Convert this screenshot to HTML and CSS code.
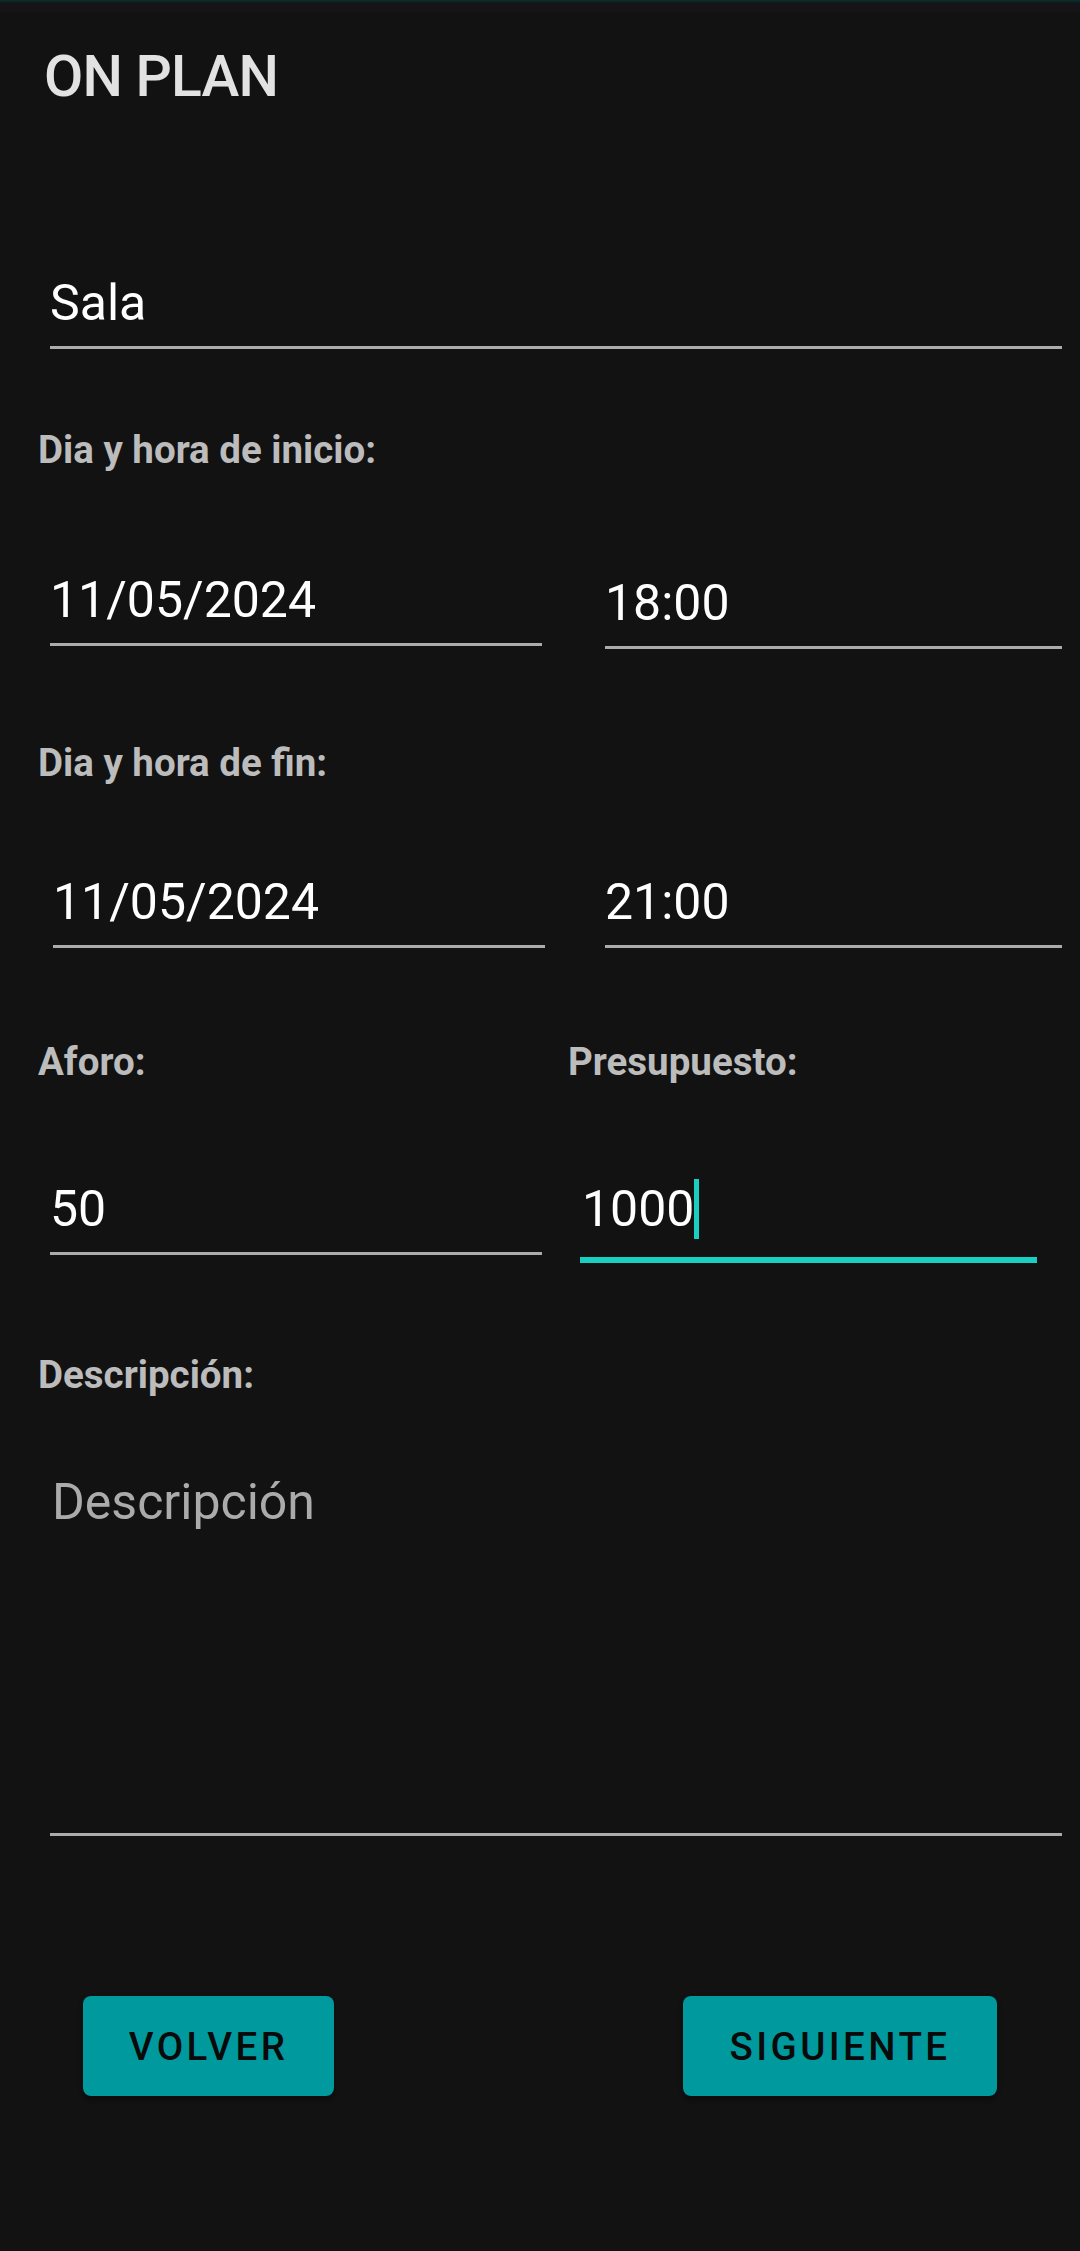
FILE: index.html
```html
<!DOCTYPE html>
<html lang="es">
<head>
<meta charset="utf-8">
<title>ON PLAN</title>
<link rel="stylesheet" href="styles.css">
</head>
<body>
<div class="screen">
  <div class="statusline"></div>
  <div class="band"></div>
  <header class="appbar">
    <h1 class="title">ON PLAN</h1>
  </header>
  <main class="form">
    <div class="field field-full field-sala">
      <span class="value">Sala</span>
    </div>

    <div class="label label-inicio">Dia y hora de inicio:</div>
    <div class="row row-inicio">
      <div class="field field-date"><span class="value">11/05/2024</span></div>
      <div class="field field-time field-time-low"><span class="value">18:00</span></div>
    </div>

    <div class="label label-fin">Dia y hora de fin:</div>
    <div class="row row-fin">
      <div class="field field-date field-date-shift"><span class="value">11/05/2024</span></div>
      <div class="field field-time"><span class="value">21:00</span></div>
    </div>

    <div class="row label-row">
      <div class="label label-aforo">Aforo:</div>
      <div class="label label-presupuesto">Presupuesto:</div>
    </div>
    <div class="row row-numbers">
      <div class="field field-date"><span class="value">50</span></div>
      <div class="field field-budget focused"><span class="value">1000</span><span class="cursor"></span></div>
    </div>

    <div class="label label-desc">Descripción:</div>
    <div class="field field-full field-desc">
      <span class="value placeholder">Descripción</span>
    </div>

    <div class="buttons">
      <button class="btn btn-back">VOLVER</button>
      <button class="btn btn-next">SIGUIENTE</button>
    </div>
  </main>
</div>
</body>
</html>
```

FILE: styles.css
```css
html, body {
  margin: 0;
  padding: 0;
  background: #121212;
}

body {
  font-family: Roboto, "Noto Sans", "Liberation Sans", sans-serif;
  color: #ffffff;
}

.screen {
  width: 1080px;
  height: 2251px;
  display: flex;
  flex-direction: column;
  background: #121212;
}

.statusline {
  height: 3px;
  flex: none;
  background: linear-gradient(#0a2f2c, #0d1b1a);
}

.band {
  height: 9px;
  flex: none;
  background: #151315;
}

.appbar {
  display: flex;
  flex-direction: column;
}

.title {
  margin: 36px 0 0 44px;
  font-size: 57px;
  line-height: 57px;
  font-weight: 500;
  color: #e2e2e2;
  letter-spacing: -0.8px;
}

.form {
  display: flex;
  flex-direction: column;
}

.field {
  display: flex;
  align-items: flex-start;
  border-bottom: 3px solid #ababab;
  padding-bottom: 18px;
  position: relative;
}

.value {
  font-size: 50px;
  line-height: 50px;
  font-weight: 400;
  color: #ffffff;
}

.placeholder {
  color: #ababab;
}

.field-full {
  margin-left: 50px;
  width: 1012px;
}

.field-sala {
  margin-top: 173px;
}

.label {
  font-size: 38.5px;
  line-height: 38.5px;
  font-weight: 700;
  color: #bcbcbc;
  margin-left: 38px;
}

.label-inicio {
  margin-top: 82px;
}

.row {
  display: flex;
  align-items: flex-start;
}

.row-inicio {
  margin-top: 105px;
}

.field-date {
  margin-left: 50px;
  width: 492px;
}

.field-date-shift {
  margin-left: 53px;
}

.field-time {
  margin-left: 63px;
  width: 457px;
}

.field-date-shift + .field-time {
  margin-left: 60px;
}

.field-time-low {
  margin-top: 3px;
}

.label-fin {
  margin-top: 95px;
}

.row-fin {
  margin-top: 95px;
}

.label-row {
  margin-top: 95px;
}

.label-row .label-aforo {
  width: 494px;
}

.label-row .label-presupuesto {
  margin-left: 36px;
}

.row-numbers {
  margin-top: 102px;
}

.field-budget {
  margin-left: 38px;
  width: 457px;
  padding-left: 2px;
  box-sizing: border-box;
}

.focused {
  border-bottom: 6px solid #19cfc1;
}

.cursor {
  display: block;
  width: 5px;
  height: 60px;
  margin-top: -5px;
  background: #19cfc1;
}

.label-desc {
  margin-top: 93px;
}

.field-desc {
  margin-top: 83px;
  height: 338px;
  padding-left: 2px;
  box-sizing: content-box;
  width: 1010px;
}

.buttons {
  display: flex;
  justify-content: space-between;
  margin-top: 160px;
  padding: 0 83px 0 83px;
}

.btn {
  height: 100px;
  border: none;
  border-radius: 8px;
  background: #009a9e;
  color: #0a0a0a;
  font-family: Roboto, "Noto Sans", "Liberation Sans", sans-serif;
  font-size: 38.5px;
  font-weight: 500;
  letter-spacing: 3.4px;
  box-shadow: 0 3px 5px rgba(0, 0, 0, 0.45);
  padding: 0;
}

.btn-back {
  width: 251px;
}

.btn-next {
  width: 314px;
}
```
